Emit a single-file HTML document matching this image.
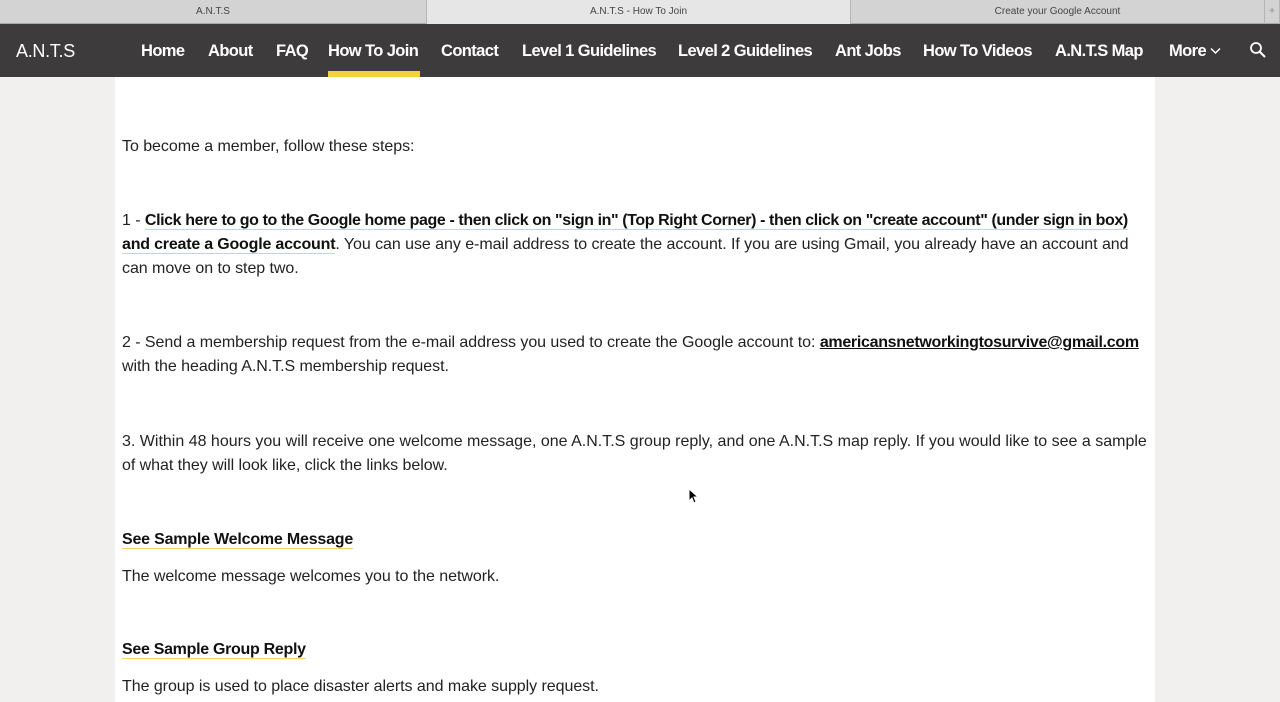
<!DOCTYPE html>
<html><head><meta charset="utf-8"><style>
*{margin:0;padding:0;box-sizing:border-box}
body{width:1280px;height:702px;overflow:hidden;background:#f2efef;font-family:"Liberation Sans",sans-serif;position:relative}
.tabs{position:absolute;top:0;left:0;width:1280px;height:24px;background:#d3d3d3;border-bottom:1px solid #aaa}
.tab{position:absolute;top:0;height:24px;font-size:10px;color:#444;text-align:center;line-height:24px;border-right:1px solid #b5b5b5}
.nav{position:absolute;top:24px;left:0;width:1280px;height:53px;background:#3e3b3d}
.nav span{position:absolute;top:1px;line-height:53px;color:#fff;font-weight:bold;font-size:16.5px;letter-spacing:-0.6px;white-space:nowrap}
.logo{position:absolute;left:16px;top:25px;line-height:53px;color:#fff;font-size:18px;letter-spacing:-0.3px}
.ul{position:absolute;left:328px;top:71px;width:92px;height:6px;background:#f5d13b}
.panel{position:absolute;left:115px;top:77px;width:1040px;height:625px;background:#fff}
.t{position:absolute;left:122px;font-size:16px;color:#222;line-height:24px;white-space:nowrap;letter-spacing:-0.05px}
b{font-weight:bold;color:#111}
.a{border-bottom:1px solid #f0d66a}
.u{text-decoration:underline}
</style></head><body>
<div class="tabs">
<div class="tab" style="left:0;width:427px">A.N.T.S</div>
<div class="tab" style="left:427px;width:424px;background:#e6e6e6">A.N.T.S - How To Join</div>
<div class="tab" style="left:851px;width:414px">Create your Google Account</div>
<div class="tab" style="left:1265px;width:15px;color:#888">+</div>
</div>
<div class="nav">
<span style="left:141px">Home</span>
<span style="left:208px">About</span>
<span style="left:276px">FAQ</span>
<span style="left:328px">How To Join</span>
<span style="left:441px">Contact</span>
<span style="left:522px">Level 1 Guidelines</span>
<span style="left:678px">Level 2 Guidelines</span>
<span style="left:835px">Ant Jobs</span>
<span style="left:923px">How To Videos</span>
<span style="left:1055px">A.N.T.S Map</span>
<span style="left:1169px">More <svg width="11" height="8" viewBox="0 0 11 8" style="vertical-align:1px"><path d="M1 1.5l4.5 4.5 4.5-4.5" fill="none" stroke="#fff" stroke-width="1.5"/></svg></span>
<svg style="position:absolute;left:1249px;top:17px" width="18" height="18" viewBox="0 0 18 18"><circle cx="7" cy="7" r="5" fill="none" stroke="#fff" stroke-width="1.8"/><path d="M10.5 10.5l5.5 5.5" stroke="#fff" stroke-width="2"/></svg>
</div>
<div class="logo">A.N.T.S</div>
<div class="ul"></div>
<div class="panel"></div>
<div class="t" style="top:135px">To become a member, follow these steps:</div>
<div class="t" style="top:209px">1 - <b class="a" style="letter-spacing:-0.4px">Click here to go to the Google home page - then click on "sign in" (Top Right Corner) - then click on "create account" (under sign in box)</b></div>
<div class="t" style="top:233px"><b class="a" style="letter-spacing:-0.2px">and create a Google account</b>. You can use any e-mail address to create the account. If you are using Gmail, you already have an account and</div>
<div class="t" style="top:257px">can move on to step two.</div>
<div class="t" style="top:331px">2 - Send a membership request from the e-mail address you used to create the Google account to: <b class="u" style="letter-spacing:-0.3px">americansnetworkingtosurvive@gmail.com</b></div>
<div class="t" style="top:355px">with the heading A.N.T.S membership request.</div>
<div class="t" style="top:430px;letter-spacing:0px">3. Within 48 hours you will receive one welcome message, one A.N.T.S group reply, and one A.N.T.S map reply. If you would like to see a sample</div>
<div class="t" style="top:454px">of what they will look like, click the links below.</div>
<div class="t" style="top:528px"><b class="a" style="letter-spacing:-0.2px">See Sample Welcome Message</b></div>
<div class="t" style="top:565px">The welcome message welcomes you to the network.</div>
<div class="t" style="top:638px"><b class="a" style="letter-spacing:-0.3px">See Sample Group Reply</b></div>
<div class="t" style="top:675px">The group is used to place disaster alerts and make supply request.</div>
<svg style="position:absolute;left:688px;top:488px" width="10" height="16" viewBox="0 0 10 16"><path d="M1 1v12l3-3 2 5 2-1-2-5h4z" fill="#000" stroke="#fff" stroke-width="1"/></svg>
</body></html>
